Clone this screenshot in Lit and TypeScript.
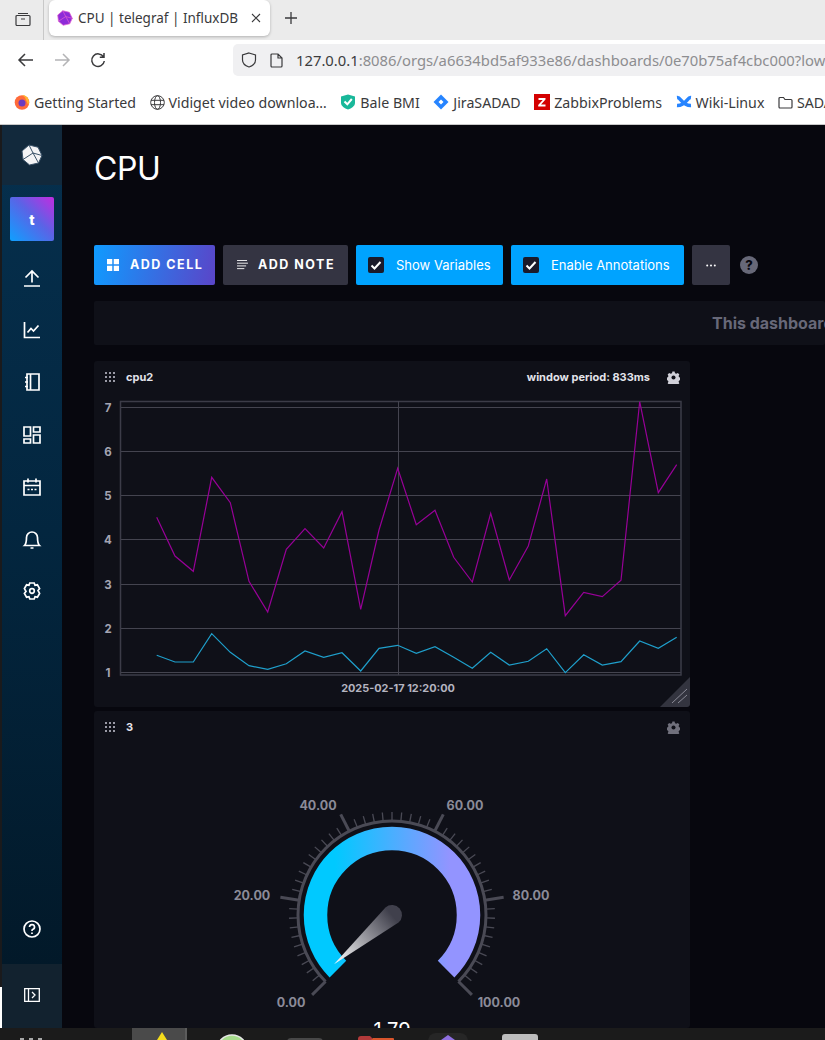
import { LitElement, html, css, svg } from "lit";
import { customElement } from "lit/decorators.js";

const magenta: [number, number][] = [
  [156.7, 517.3], [175, 556], [193.3, 571.3], [211.7, 477.3], [230.3, 502.7], [249, 581.3],
  [267.7, 612], [286.3, 549.3], [305, 528.7], [323.7, 548], [342, 511.7], [360.7, 609.3],
  [379, 530], [397.7, 468.3], [416.3, 524.7], [435, 510.3], [453.7, 557.3], [472.3, 582],
  [490.7, 513.3], [509.3, 580], [528.3, 546], [546.7, 479], [565.3, 615.7], [583.7, 592.3],
  [602.3, 596.7], [621, 580.3], [639.7, 401.7], [658.3, 492.7], [676.7, 464.7],
];

const cyan: [number, number][] = [
  [156.7, 655.3], [175, 662], [193.3, 662], [211.7, 633.7], [230.3, 652.3], [249, 665.7],
  [267.7, 669.3], [286.3, 663.7], [305, 651], [323.7, 657.3], [342, 652.7], [360.7, 671],
  [379, 648.3], [397.7, 645.3], [416.3, 653.3], [435, 646.7], [453.7, 657.3], [472.3, 668.3],
  [490.7, 652.3], [509.3, 665], [528.3, 661.3], [546.7, 648.7], [565.3, 672.7], [583.7, 654.7],
  [602.3, 665], [621, 661.7], [639.7, 641], [658.3, 648.3], [676.7, 637.3],
];

const gridRows = [
  { label: "7", y: 407.5 },
  { label: "6", y: 451.5 },
  { label: "5", y: 495.5 },
  { label: "4", y: 539.5 },
  { label: "3", y: 584.5 },
  { label: "2", y: 628.5 },
  { label: "1", y: 672.5 },
];

const toPoints = (pts: [number, number][]) => pts.map((p) => p.join(",")).join(" ");

// gauge geometry, all in page coordinates
const cx = 392;
const cy = 915;
const polar = (value: number, r: number) => {
  const a = ((135 + 2.7 * value) * Math.PI) / 180;
  return [cx + r * Math.cos(a), cy + r * Math.sin(a)];
};
const arc = (r: number) => {
  const [x1, y1] = polar(0, r);
  const [x2, y2] = polar(100, r);
  return `M${x1} ${y1} A${r} ${r} 0 1 1 ${x2} ${y2}`;
};
const gaugeLabels = [
  { text: "0.00", x: 291, y: 1007 },
  { text: "20.00", x: 252, y: 900 },
  { text: "40.00", x: 318, y: 810 },
  { text: "60.00", x: 465, y: 810 },
  { text: "80.00", x: 531, y: 900 },
  { text: "100.00", x: 499, y: 1007 },
];

const gearPath =
  "M7.5 .8h3l.6 2.3 1.8 .8 2.100-1.100 2.100 2.100-1.100 2.100 .8 1.800 2.300 .6v3l-2.300 .6-.8 1.800 1.100 2.100-2.100 2.100-2.100-1.100-1.800 .8-.6 2.300h-3l-.6-2.300-1.800-.8-2.100 1.100-2.100-2.100 1.100-2.100-.8-1.800-2.300-.6v-3l2.300-.6 .8-1.800-1.100-2.100 2.100-2.100 2.100 1.100 1.800-.8z";

@customElement("app-root")
export class AppRoot extends LitElement {
  static override styles = css`
    :host {
      display: block;
      width: 825px;
      height: 1040px;
      overflow: hidden;
      font-family: Inter, "Liberation Sans", sans-serif;
      background: #07070e;
    }
    svg {
      display: block;
      flex: none;
    }

    /* browser chrome */
    .tabstrip {
      height: 40px;
      background: #ebebeb;
      display: flex;
      align-items: flex-start;
      font-family: "Noto Sans", sans-serif;
      color: #3a3a3c;
    }
    .tab-group {
      width: 44px;
      height: 40px;
      display: flex;
      align-items: center;
      justify-content: center;
      border-right: 1px solid #c8c8c8;
      padding-left: 2px;
      padding-bottom: 3px;
      box-sizing: border-box;
    }
    .tab {
      margin-left: 5px;
      width: 221px;
      height: 36px;
      background: #fff;
      border-radius: 6px;
      box-shadow: 0 1px 3px rgba(0, 0, 0, 0.25);
      display: flex;
      align-items: center;
      padding: 0 9px 0 8px;
      box-sizing: border-box;
      gap: 5px;
      font-size: 13.5px;
      white-space: nowrap;
    }
    .tab span {
      flex: 1;
    }
    .new-tab {
      margin-left: 14px;
      height: 36px;
      display: flex;
      align-items: center;
    }
    .toolbar {
      height: 48px;
      background: #fff;
      display: flex;
      align-items: center;
      padding: 0 0 8px 17px;
      box-sizing: border-box;
    }
    .nav {
      width: 36px;
      display: flex;
    }
    .urlbar {
      margin-left: 108px;
      flex: 1;
      min-width: 0;
      height: 32px;
      background: #f0f0f2;
      border-radius: 5px 0 0 5px;
      display: flex;
      align-items: center;
      padding-left: 8px;
      gap: 13px;
      overflow: hidden;
      font-family: "Noto Sans", sans-serif;
      font-size: 14.8px;
      color: #8d8d90;
      white-space: nowrap;
    }
    .urlbar b {
      font-weight: 400;
      color: #3c3c3e;
    }
    .bookmarks {
      height: 37px;
      background: #fff;
      border-bottom: 1px solid #c9c9c9;
      box-sizing: border-box;
      display: flex;
      align-items: center;
      padding: 0 0 8px 14px;
      gap: 13.5px;
      overflow: hidden;
      font-family: "Noto Sans", sans-serif;
      font-size: 14.2px;
      color: #3a3a3c;
      white-space: nowrap;
    }
    .bm {
      display: flex;
      align-items: center;
      gap: 4px;
      flex: none;
    }

    /* influx page */
    .page {
      height: 903px;
      display: flex;
      overflow: hidden;
      background: #07070e;
    }
    .edge {
      width: 2px;
      background: #1a1a1c;
      display: flex;
      flex-direction: column;
      justify-content: flex-end;
    }
    .edge i {
      display: block;
      height: 41px;
      background: #fff;
    }
    .sidebar {
      width: 60px;
      background: linear-gradient(180deg, #06304e 0%, #03263f 45%, #021726 100%);
      display: flex;
      flex-direction: column;
      align-items: center;
    }
    .logo-tile {
      width: 100%;
      height: 60px;
      background: #12293c;
      display: flex;
      align-items: center;
      justify-content: center;
    }
    .org {
      margin-top: 12px;
      width: 44px;
      height: 44px;
      border-radius: 2px;
      background: linear-gradient(45deg, #0ea0ff 0%, #5b63e6 55%, #c22ce0 100%);
      color: #fff;
      font-weight: 800;
      font-size: 14px;
      display: flex;
      align-items: center;
      justify-content: center;
    }
    .nav-items {
      margin-top: 11px;
      display: flex;
      flex-direction: column;
      align-items: center;
      width: 100%;
    }
    .nav-item {
      height: 52.2px;
      display: flex;
      align-items: center;
      justify-content: center;
    }
    .spacer {
      flex: 1;
    }
    .help-item {
      height: 70px;
      display: flex;
      align-items: center;
      justify-content: center;
      padding-bottom: 0;
    }
    .collapse-tile {
      width: 100%;
      height: 64px;
      background: #12222f;
      display: flex;
      align-items: center;
      justify-content: center;
      padding-bottom: 2px;
      box-sizing: border-box;
    }
    .content {
      flex: 1;
      min-width: 0;
      padding-left: 32px;
      overflow: hidden;
    }
    h1 {
      margin: 0;
      height: 120px;
      padding-top: 25px;
      box-sizing: border-box;
      font-size: 32px;
      line-height: 38px;
      font-weight: 400;
      color: #fff;
      letter-spacing: -0.4px;
    }
    .actions {
      display: flex;
      align-items: center;
      gap: 8px;
      height: 40px;
    }
    .btn {
      height: 40px;
      border-radius: 2px;
      display: flex;
      align-items: center;
      box-sizing: border-box;
      color: #fff;
      white-space: nowrap;
      flex: none;
    }
    .btn-cmd {
      font-size: 12.5px;
      font-weight: 700;
      letter-spacing: 1.5px;
      line-height: 14px;
    }
    .btn-cmd span {
      margin-bottom: 1px;
    }
    .btn-cell {
      width: 121px;
      padding-left: 13px;
      gap: 11px;
      background: linear-gradient(100deg, #0f9bff 0%, #5a45c8 100%);
    }
    .btn-note {
      width: 125px;
      padding-left: 14px;
      gap: 10px;
      background: #343442;
    }
    .btn-toggle {
      background: #00a3ff;
      font-size: 13px;
      font-weight: 400;
      gap: 12px;
      padding-left: 12px;
    }
    .btn-toggle span:last-child {
      margin-bottom: 1px;
    }
    .check {
      width: 16px;
      height: 16px;
      border-radius: 2px;
      background: #1a1a2a;
      display: flex;
      align-items: center;
      justify-content: center;
    }
    .w-vars {
      width: 147px;
    }
    .w-annot {
      width: 173px;
    }
    .btn-more {
      width: 38px;
      background: #343442;
      justify-content: center;
    }
    .help-dot {
      margin-left: 2px;
      width: 18px;
      height: 18px;
      border-radius: 50%;
      background: #676878;
      color: #07070e;
      font-size: 13px;
      font-weight: 800;
      display: flex;
      align-items: center;
      justify-content: center;
    }
    .notice {
      margin-top: 16px;
      height: 44px;
      background: #0f1018;
      border-radius: 2px;
      display: flex;
      align-items: center;
      padding-left: 618px;
      font-size: 16px;
      font-weight: 700;
      color: #676878;
      white-space: nowrap;
      overflow: hidden;
    }
    .cells {
      margin-top: 16px;
      width: 596px;
      display: flex;
      flex-direction: column;
      gap: 4px;
    }
    .cell {
      background: #0f1018;
      border-radius: 3px;
      overflow: hidden;
    }
    .cell-head {
      height: 32px;
      display: flex;
      align-items: center;
      padding: 0 10px 0 11px;
      gap: 11px;
      font-size: 11px;
      font-weight: 700;
      color: #e3e3ea;
    }
    .cell-head .name {
      flex: 1;
    }
    .period {
      margin-right: 6px;
    }
    .plot-label {
      font-size: 11.5px;
      font-weight: 700;
      fill: #a4a4b2;
    }
    .plot-time {
      font-size: 10.9px;
      font-weight: 700;
      fill: #b4b4c0;
    }
    .gauge-label {
      font-size: 12.5px;
      font-weight: 700;
      fill: #8b8b98;
    }
    .gauge-value {
      font-size: 20px;
      font-weight: 400;
      fill: #fff;
    }

    /* desktop dock peeking in at the bottom */
    .dock {
      height: 12px;
      background: #1b1b1b;
      display: flex;
      overflow: hidden;
      align-items: flex-start;
    }
    .dots {
      margin: 10px 0 0 20px;
      width: 24px;
      height: 2px;
      flex: none;
      background: repeating-linear-gradient(90deg, #a8a8a8 0 4px, transparent 4px 9px);
    }
    .dock-active {
      margin-left: 88px;
      width: 55px;
      height: 12px;
      flex: none;
      background: #4a4a4a;
      border-right: 2px solid #5c5c5c;
      box-sizing: border-box;
      display: flex;
      justify-content: center;
    }
    .d-green {
      margin-left: 29px;
    }
    .d-gray {
      margin-left: 38px;
    }
    .d-folder {
      margin-left: 33px;
    }
    .d-tile {
      margin-left: 33px;
    }
    .d-light {
      margin-left: 34px;
    }
  `;

  private navIcon(content: unknown) {
    return html`<svg width="20" height="20" viewBox="0 0 20 20" fill="none" stroke="#fff" stroke-width="1.7">${content}</svg>`;
  }

  private gear(size: number, color: string) {
    return html`<svg width=${size} height=${size} viewBox="0 0 18 18"><path d=${gearPath} fill=${color}></path><circle cx="9" cy="9" r="2.800" fill="#0f1018"></circle></svg>`;
  }

  private dragDots() {
    const dots = [];
    for (let r = 0; r < 3; r++) {
      for (let c = 0; c < 3; c++) {
        dots.push(svg`<rect x=${c * 4} y=${r * 4} width="2" height="2" fill="#9a9aa6"></rect>`);
      }
    }
    return html`<svg width="10" height="10" viewBox="0 0 10 10">${dots}</svg>`;
  }

  private influxLogo(size: number, fill: string, stroke: string) {
    return html`<svg width=${size} height=${size} viewBox="0 0 22 22">
      <path d="M8 1 17 3.200 21 11.500 17.500 19 8.500 21 2 15.500 1 7Z" fill=${fill}></path>
      <path d="M8 1 12 9 21 11.500M12 9 2 15.500M12 9 17.500 19M8 1 1 7 2 15.500 8.500 21 17.500 19 21 11.500 17 3.200Z" fill="none" stroke=${stroke} stroke-width="1"></path>
    </svg>`;
  }

  private chart() {
    return html`<svg width="596" height="314" viewBox="94 393 596 314">
      ${gridRows.map(
        (r) => svg`
          <line x1="120" x2="681" y1=${r.y} y2=${r.y} stroke="#44444f" stroke-width="1"></line>
          <text class="plot-label" x="108" y=${r.y + 4} text-anchor="middle">${r.label}</text>`
      )}
      <rect x="120.500" y="401.500" width="560.500" height="273.500" fill="none" stroke="#3c3c48" stroke-width="1.500"></rect>
      <line x1="398.500" x2="398.500" y1="401" y2="675" stroke="#44444f"></line>
      <polyline points=${toPoints(magenta)} fill="none" stroke="#970097" stroke-width="1.200"></polyline>
      <polyline points=${toPoints(cyan)} fill="none" stroke="#1f9fcb" stroke-width="1.200"></polyline>
      <text class="plot-time" x="398" y="692" text-anchor="middle">2025-02-17 12:20:00</text>
      <path d="M660 707 690 677V705a2 2 0 0 1-2 2Z" fill="#33343f"></path>
      <path d="M672 703 687 689M678 703 687 695" stroke="#8a8a96" stroke-width="1" fill="none"></path>
    </svg>`;
  }

  private gauge() {
    const ticks = [];
    for (let v = 0; v <= 100; v += 2) {
      const major = v % 20 === 0;
      const [x1, y1] = polar(v, 94);
      const [x2, y2] = polar(v, major ? 113 : 103);
      ticks.push(
        svg`<line x1=${x1} y1=${y1} x2=${x2} y2=${y2} stroke="#4a4a55" stroke-width=${major ? 3 : 1.3}></line>`
      );
    }
    return html`<svg width="596" height="285" viewBox="94 743 596 285">
      <defs>
        <linearGradient id="sweep" gradientUnits="userSpaceOnUse" x1="335" y1="0" x2="450" y2="0">
          <stop offset="0" stop-color="#00c9ff"></stop>
          <stop offset="1" stop-color="#9394ff"></stop>
        </linearGradient>
        <linearGradient id="needle" gradientUnits="userSpaceOnUse" x1="392" y1="915" x2="334" y2="964">
          <stop offset="0" stop-color="#40404c"></stop>
          <stop offset="1" stop-color="#ffffff"></stop>
        </linearGradient>
      </defs>
      ${ticks}
      <path d=${arc(94)} fill="none" stroke="#4a4a55" stroke-width="3"></path>
      <path d=${arc(76.5)} fill="none" stroke="url(#sweep)" stroke-width="23.500"></path>
      <path d="M385.500 907.400A10 10 0 0 1 398.500 922.600L334 964.300Z" fill="url(#needle)"></path>
      ${gaugeLabels.map(
        (l) => svg`<text class="gauge-label" x=${l.x} y=${l.y} text-anchor="middle">${l.text}</text>`
      )}
      <text class="gauge-value" x="392" y="1037" text-anchor="middle">1.79</text>
    </svg>`;
  }

  private checkbox() {
    return html`<span class="check"><svg width="12" height="12" viewBox="0 0 12 12"><path d="M1.500 6.500 4.500 9.500 10.500 3" fill="none" stroke="#fff" stroke-width="2"></path></svg></span>`;
  }

  override render() {
    return html`
      <div class="tabstrip">
        <div class="tab-group">
          <svg width="16" height="16" viewBox="0 0 16 16" fill="none" stroke="#3a3a3c" stroke-width="1.200"><path d="M3 2.500h10M1 5.500a1 1 0 0 1 1-1h12a1 1 0 0 1 1 1v8a1 1 0 0 1-1 1H2a1 1 0 0 1-1-1zM6 8h4"></path></svg>
        </div>
        <div class="tab">
          ${this.influxLogo(16, "#8e2bd8", "#e060d0")}
          <span>CPU | telegraf | InfluxDB</span>
          <svg width="10" height="10" viewBox="0 0 10 10" stroke="#3a3a3c" stroke-width="1.100"><path d="M1 1 9 9M9 1 1 9"></path></svg>
        </div>
        <div class="new-tab">
          <svg width="14" height="14" viewBox="0 0 14 14" stroke="#3a3a3c" stroke-width="1.300"><path d="M7 1V13M1 7H13"></path></svg>
        </div>
      </div>
      <div class="toolbar">
        <span class="nav"><svg width="18" height="16" viewBox="0 0 18 16" fill="none" stroke="#3a3a3c" stroke-width="1.500"><path d="M16 8H2M8 2 2 8l6 6"></path></svg></span>
        <span class="nav"><svg width="18" height="16" viewBox="0 0 18 16" fill="none" stroke="#b4b4b6" stroke-width="1.500"><path d="M2 8H16M10 2l6 6-6 6"></path></svg></span>
        <span class="nav"><svg width="18" height="18" viewBox="0 0 18 18" fill="none" stroke="#3a3a3c" stroke-width="1.500"><path d="M14.500 6A6.300 6.300 0 1 0 15.300 10M15 2V6.300H10.800"></path></svg></span>
        <div class="urlbar">
          <svg width="16" height="16" viewBox="0 0 16 16" fill="none" stroke="#3a3a3c" stroke-width="1.200"><path d="M8 1 14.500 3V8C14.500 11.500 11 14 8 15 5 14 1.500 11.500 1.500 8V3Z"></path></svg>
          <svg width="13" height="15" viewBox="0 0 13 15" fill="none" stroke="#3a3a3c" stroke-width="1.200"><path d="M1 2a1 1 0 0 1 1-1h6l4 4v8a1 1 0 0 1-1 1H2a1 1 0 0 1-1-1zM8 1v4h4"></path></svg>
          <span><b>127.0.0.1</b>:8086/orgs/a6634bd5af933e86/dashboards/0e70b75af4cbc000?low</span>
        </div>
      </div>
      <div class="bookmarks">
        <span class="bm">
          <svg width="16" height="16" viewBox="0 0 16 16"><circle cx="8" cy="8.500" r="7.300" fill="#ff6a3a"></circle><path d="M8 1c4 0 7 3 7 7 0 1-.3 2-.8 3L11 3.500z" fill="#ffb52e"></path><circle cx="8" cy="9" r="3.500" fill="#6b3bc0"></circle></svg>
          Getting Started
        </span>
        <span class="bm">
          <svg width="15" height="15" viewBox="0 0 15 15" fill="none" stroke="#3a3a3c" stroke-width="1"><circle cx="7.500" cy="7.500" r="6.800"></circle><ellipse cx="7.500" cy="7.500" rx="3" ry="6.800"></ellipse><path d="M1 5.300H14M1 9.700H14"></path></svg>
          Vidiget video downloa…
        </span>
        <span class="bm">
          <svg width="16" height="16" viewBox="0 0 16 16"><path d="M1 2.500 8 .5l7 2V9c0 3-3.500 5.500-7 6.500C4.500 14.500 1 12 1 9Z" fill="#19b89a"></path><path d="M4.500 7.500 7.300 10.300 11.800 5" fill="none" stroke="#fff" stroke-width="2"></path></svg>
          Bale BMI
        </span>
        <span class="bm">
          <svg width="16" height="16" viewBox="0 0 16 16"><path d="M8 .5 15.500 8 8 15.500 .5 8Z" fill="#2684ff"></path><path d="M8 5.500 10.500 8 8 10.500 5.500 8Z" fill="#fff"></path></svg>
          JiraSADAD
        </span>
        <span class="bm">
          <svg width="16" height="16" viewBox="0 0 16 16"><rect width="16" height="16" fill="#d40000"></rect><path d="M4.500 4H11.500V5.500L7 10.500H11.500V12.500H4.200V11L8.700 6H4.500Z" fill="#fff"></path></svg>
          ZabbixProblems
        </span>
        <span class="bm">
          <svg width="16" height="16" viewBox="0 0 16 16" fill="none" stroke="#2684ff" stroke-width="3.500"><path d="M1 3.500C5 3 6 12 15 11.500M15 3.500C11 3 10 12 1 11.500"></path></svg>
          Wiki-Linux
        </span>
        <span class="bm">
          <svg width="15" height="13" viewBox="0 0 15 13" fill="none" stroke="#3a3a3c" stroke-width="1.200"><path d="M1 2.500a1 1 0 0 1 1-1h3.500l1.500 2h6a1 1 0 0 1 1 1v6.500a1 1 0 0 1-1 1H2a1 1 0 0 1-1-1z"></path></svg>
          SADAD
        </span>
      </div>

      <div class="page">
        <div class="edge"><i></i></div>
        <nav class="sidebar">
          <div class="logo-tile">${this.influxLogo(22, "#f4f4f6", "#3a5268")}</div>
          <div class="org">t</div>
          <div class="nav-items">
            <div class="nav-item">${this.navIcon(svg`<path d="M2 18H18M10 14.500V3M3.500 9.500 10 3l6.500 6.500"></path>`)}</div>
            <div class="nav-item">${this.navIcon(svg`<path d="M2.500 2V17.500H18M5.500 12.500 9 8.500 11.500 11 16.500 5.500"></path>`)}</div>
            <div class="nav-item">${this.navIcon(svg`<path d="M5 2H17V18H5ZM8.500 2V18M3 5.500H6M3 10H6M3 14.500H6"></path>`)}</div>
            <div class="nav-item">${this.navIcon(svg`<path d="M2 2H8.500V11H2ZM11.500 2H18V7H11.500ZM2 14H8.500V18H2ZM11.500 10H18V18H11.500Z"></path>`)}</div>
            <div class="nav-item">${this.navIcon(svg`<path d="M2 4H18V18H2ZM2 8.500H18M6 1.500V5.500M14 1.500V5.500M5.500 12.500H7.500M9 12.500H11M12.500 12.500H14.500"></path>`)}</div>
            <div class="nav-item">${this.navIcon(svg`<path d="M2.500 16.500C4 15 4.500 13 4.500 8.500A5.500 5.500 0 0 1 15.500 8.500C15.500 13 16 15 17.500 16.500ZM8.500 19H11.500"></path>`)}</div>
            <div class="nav-item">${this.navIcon(svg`<path d="M7.800 2H12.200L13 4.300 15.400 3.800 17.600 7.600 16 9.500 17.600 12.400 15.400 16.200 13 15.700 12.200 18H7.800L7 15.700 4.600 16.200 2.400 12.400 4 10.500 2.400 7.600 4.600 3.800 7 4.300ZM12.300 10A2.300 2.300 0 1 1 7.700 10 2.300 2.300 0 0 1 12.300 10Z"></path>`)}</div>
          </div>
          <div class="spacer"></div>
          <div class="help-item">${this.navIcon(svg`<circle cx="10" cy="10" r="8"></circle><path d="M7.500 8A2.500 2.500 0 1 1 10.500 10.500C10 10.700 10 11 10 12M10 13.500V15"></path>`)}</div>
          <div class="collapse-tile">
            <svg width="16" height="14" viewBox="0 0 16 14" fill="none" stroke="#fff" stroke-width="1.300"><path d="M.7 .7H15.300V13.300H.7ZM4.500 .7V13.300M8 4 11 7 8 10"></path></svg>
          </div>
        </nav>
        <main class="content">
          <h1>CPU</h1>
          <div class="actions">
            <div class="btn btn-cmd btn-cell">
              <svg width="12" height="12" viewBox="0 0 13 13" fill="#fff"><rect width="5.700" height="5.700"></rect><rect x="7.300" width="5.700" height="5.700"></rect><rect y="7.300" width="5.700" height="5.700"></rect><rect x="7.300" y="7.300" width="5.700" height="5.700"></rect></svg>
              <span>ADD CELL</span>
            </div>
            <div class="btn btn-cmd btn-note">
              <svg width="11" height="10" viewBox="0 0 12 11" stroke="#fff" stroke-width="1"><path d="M0 .5H11M0 3.500H12M0 6.500H10M0 9.500H8"></path></svg>
              <span>ADD NOTE</span>
            </div>
            <div class="btn btn-toggle w-vars">${this.checkbox()} <span>Show Variables</span></div>
            <div class="btn btn-toggle w-annot">${this.checkbox()} <span>Enable Annotations</span></div>
            <div class="btn btn-more">
              <svg width="10" height="3" viewBox="0 0 10 3" fill="#fff"><circle cx="1.200" cy="1.500" r="1"></circle><circle cx="5" cy="1.500" r="1"></circle><circle cx="8.800" cy="1.500" r="1"></circle></svg>
            </div>
            <div class="help-dot">?</div>
          </div>
          <div class="notice">This dashboard</div>
          <div class="cells">
            <section class="cell">
              <div class="cell-head">
                ${this.dragDots()}
                <span class="name">cpu2</span>
                <span class="period">window period: 833ms</span>
                ${this.gear(13, "#d0d0d8")}
              </div>
              ${this.chart()}
            </section>
            <section class="cell">
              <div class="cell-head">
                ${this.dragDots()}
                <span class="name">3</span>
                ${this.gear(13, "#70707c")}
              </div>
              ${this.gauge()}
            </section>
          </div>
        </main>
      </div>

      <div class="dock">
        <div class="dots"></div>
        <div class="dock-active">
          <svg width="24" height="12" viewBox="0 0 24 12"><path d="M15 4 20 12H10Z" fill="#f4dc1c"></path></svg>
        </div>
        <svg class="d-green" width="32" height="12" viewBox="0 0 32 12"><circle cx="16" cy="22" r="15" fill="#a6dc8c" stroke="#e6e6e6" stroke-width="1.500"></circle></svg>
        <svg class="d-gray" width="38" height="12" viewBox="0 0 38 12"><rect x="1" y="10" width="36" height="12" rx="4" fill="#484848"></rect></svg>
        <svg class="d-folder" width="38" height="12" viewBox="0 0 38 12"><path d="M1 12V11a3 3 0 0 1 3-3H13l3 3H36a1 1 0 0 1 1 1V12Z" fill="#b23a3a"></path><path d="M16 10H36a1 1 0 0 1 1 1V12H14Z" fill="#d9552c"></path></svg>
        <svg class="d-tile" width="40" height="12" viewBox="0 0 40 12"><rect y="5" width="40" height="20" rx="8" fill="#262626"></rect><path d="M20 7 27 12H13Z" fill="#8e6fe0"></path></svg>
        <svg class="d-light" width="36" height="12" viewBox="0 0 36 12"><rect y="6" width="36" height="20" rx="3" fill="#bdbdbd"></rect></svg>
      </div>
    `;
  }
}
